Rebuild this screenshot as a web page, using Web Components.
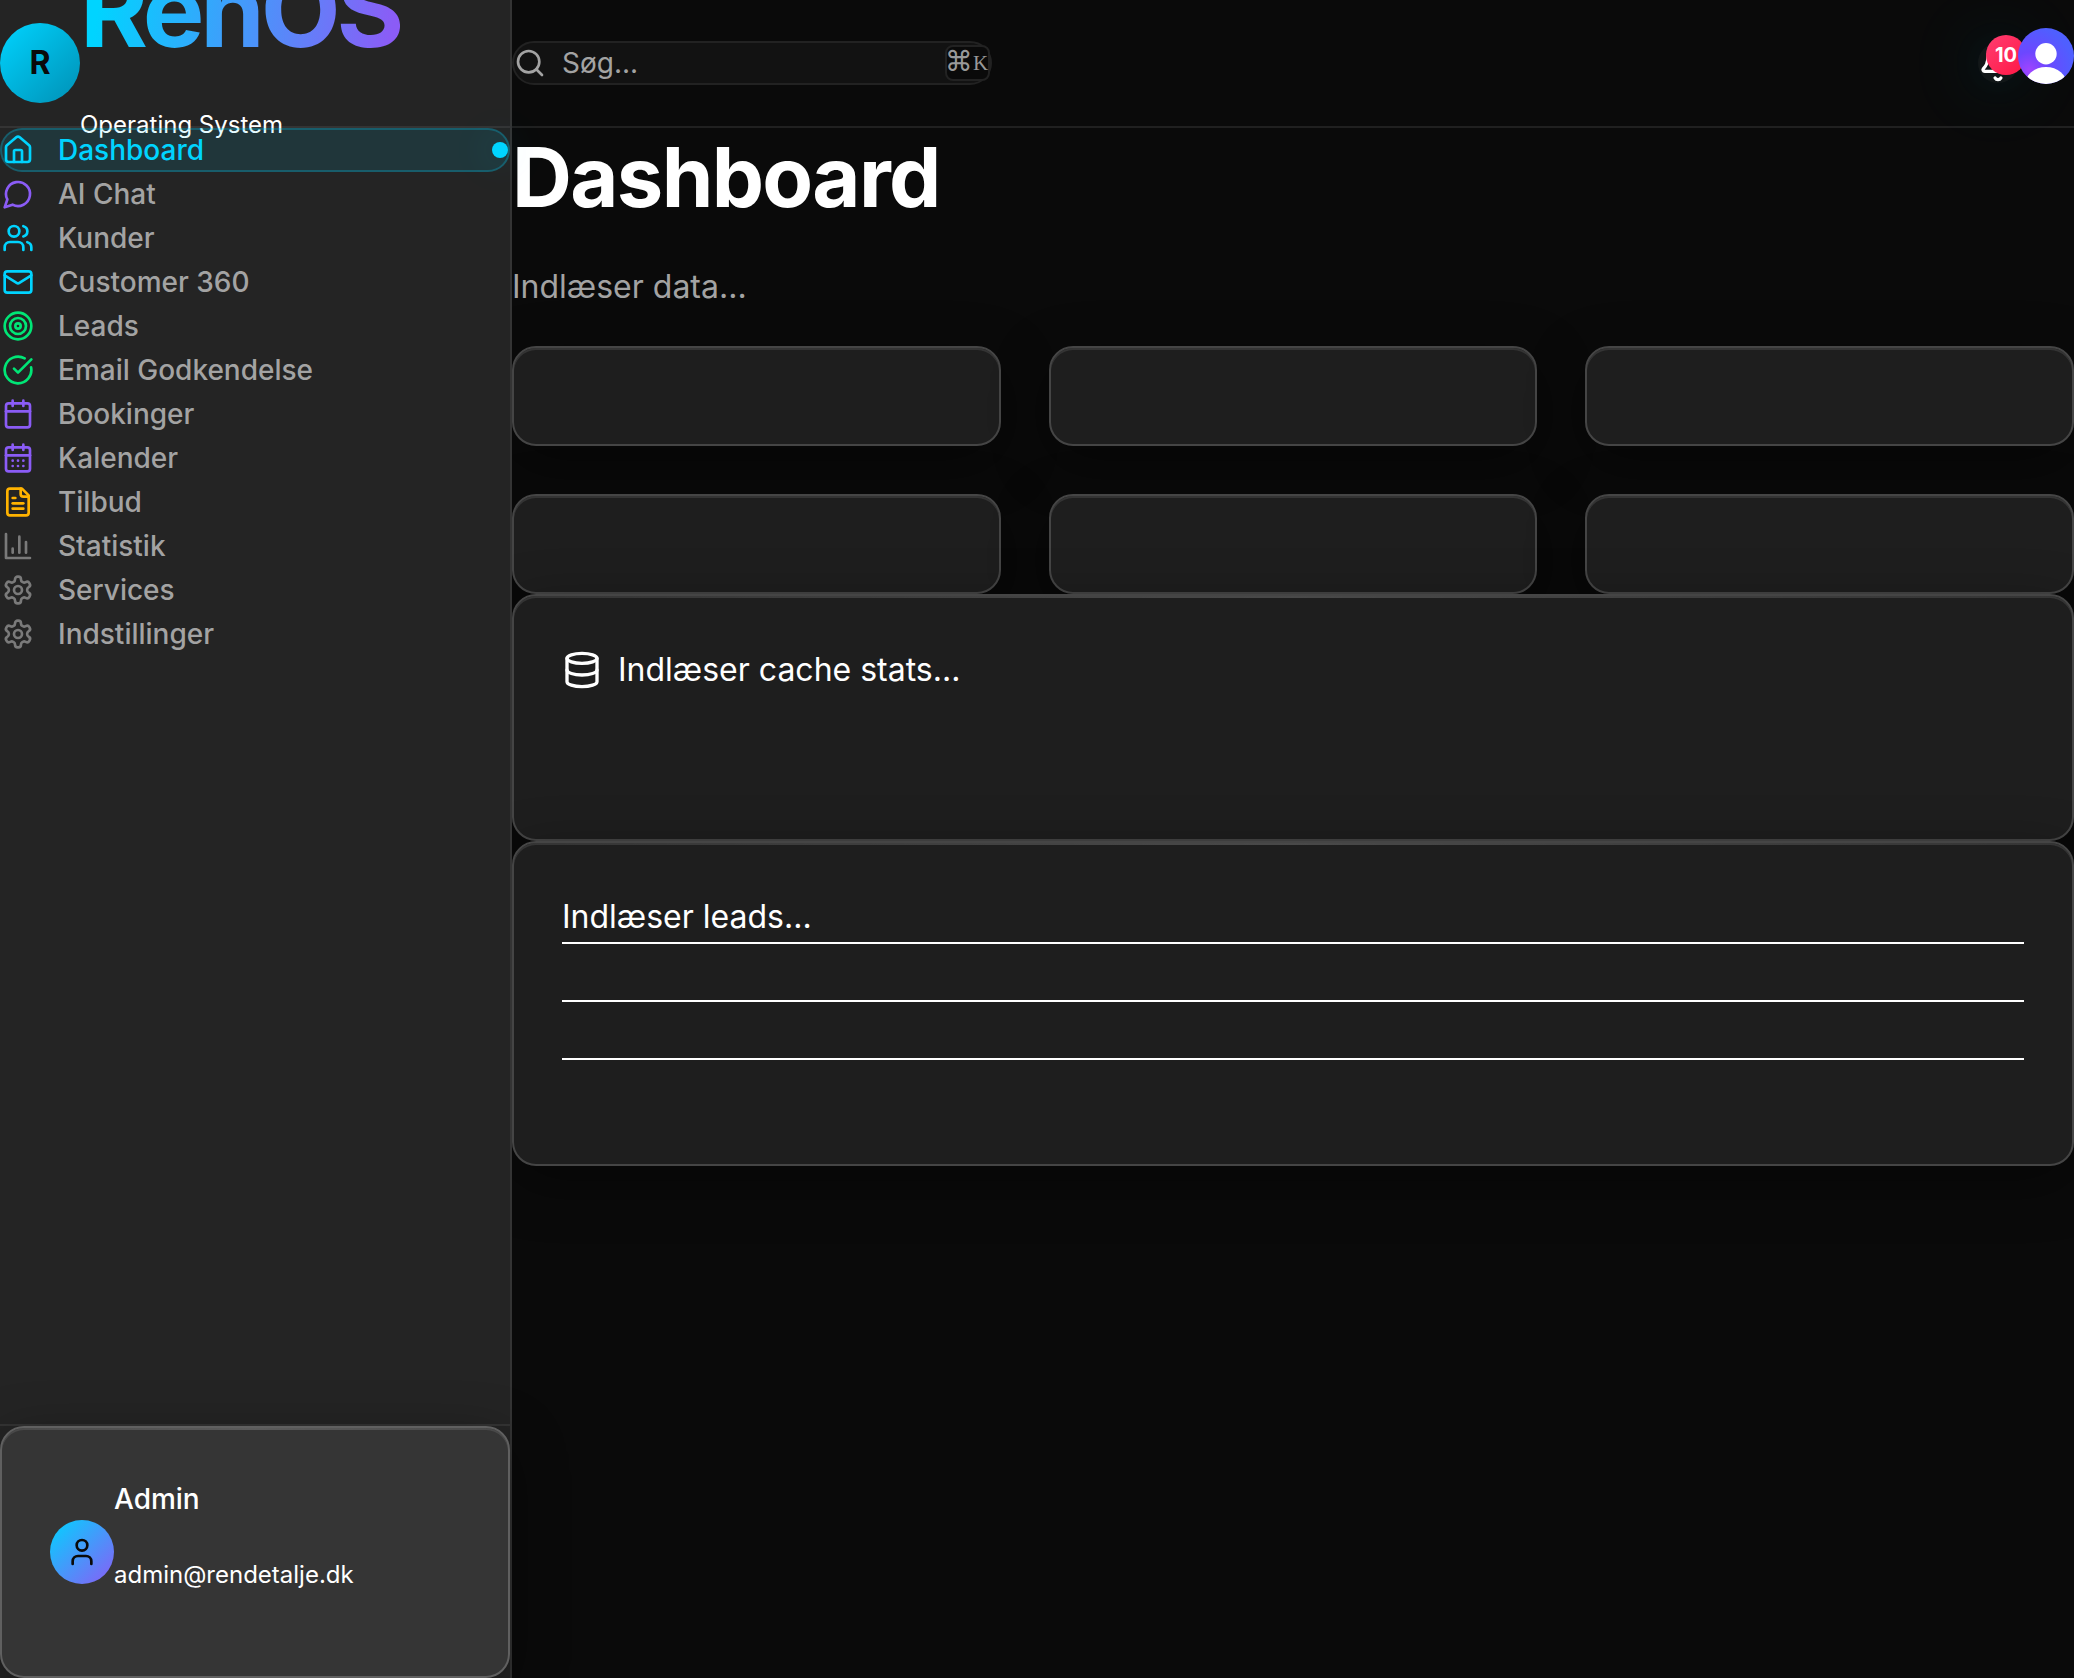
<!DOCTYPE html>
<html lang="da"><head><meta charset="utf-8"><title>RenOS</title>
<style>
html,body{margin:0;height:100%;background:#0a0a0a;overflow:hidden}
body{font-family:Inter,"Liberation Sans",sans-serif;color:#fff;font-size:32px;line-height:1.6}
</style></head><body>
<ren-app></ren-app>
<script>
const ICONS={
home:'<path d="M15 21v-8a1 1 0 0 0-1-1h-4a1 1 0 0 0-1 1v8"/><path d="M3 10a2 2 0 0 1 .709-1.528l7-5.999a2 2 0 0 1 2.582 0l7 5.999A2 2 0 0 1 21 10v9a2 2 0 0 1-2 2H5a2 2 0 0 1-2-2z"/>',
chat:'<path d="M7.9 20A9 9 0 1 0 4 16.1L2 22Z"/>',
users:'<path d="M16 21v-2a4 4 0 0 0-4-4H6a4 4 0 0 0-4 4v2"/><circle cx="9" cy="7" r="4"/><path d="M22 21v-2a4 4 0 0 0-3-3.87"/><path d="M16 3.13a4 4 0 0 1 0 7.75"/>',
mail:'<rect width="20" height="16" x="2" y="4" rx="2"/><path d="m22 7-8.97 5.7a1.94 1.94 0 0 1-2.06 0L2 7"/>',
target:'<circle cx="12" cy="12" r="10"/><circle cx="12" cy="12" r="6"/><circle cx="12" cy="12" r="2"/>',
check:'<path d="M21.801 10A10 10 0 1 1 17 3.335"/><path d="m9 11 3 3L22 4"/>',
calendar:'<path d="M8 2v4"/><path d="M16 2v4"/><rect width="18" height="18" x="3" y="4" rx="2"/><path d="M3 10h18"/>',
days:'<path d="M8 2v4"/><path d="M16 2v4"/><rect width="18" height="18" x="3" y="4" rx="2"/><path d="M3 10h18"/><path d="M8 14h.01"/><path d="M12 14h.01"/><path d="M16 14h.01"/><path d="M8 18h.01"/><path d="M12 18h.01"/><path d="M16 18h.01"/>',
file:'<path d="M15 2H6a2 2 0 0 0-2 2v16a2 2 0 0 0 2 2h12a2 2 0 0 0 2-2V7Z"/><path d="M14 2v4a2 2 0 0 0 2 2h4"/><path d="M10 9H8"/><path d="M16 13H8"/><path d="M16 17H8"/>',
chart:'<path d="M3 3v18h18"/><path d="M13 17V5"/><path d="M18 17V9"/><path d="M8 17v-3"/>',
gear:'<path d="M12.22 2h-.44a2 2 0 0 0-2 2v.18a2 2 0 0 1-1 1.73l-.43.25a2 2 0 0 1-2 0l-.15-.08a2 2 0 0 0-2.73.73l-.22.38a2 2 0 0 0 .73 2.73l.15.1a2 2 0 0 1 1 1.72v.51a2 2 0 0 1-1 1.74l-.15.09a2 2 0 0 0-.73 2.73l.22.38a2 2 0 0 0 2.73.73l.15-.08a2 2 0 0 1 2 0l.43.25a2 2 0 0 1 1 1.73V20a2 2 0 0 0 2 2h.44a2 2 0 0 0 2-2v-.18a2 2 0 0 1 1-1.73l.43-.25a2 2 0 0 1 2 0l.15.08a2 2 0 0 0 2.73-.73l.22-.39a2 2 0 0 0-.73-2.73l-.15-.08a2 2 0 0 1-1-1.74v-.5a2 2 0 0 1 1-1.74l.15-.09a2 2 0 0 0 .73-2.73l-.22-.38a2 2 0 0 0-2.73-.73l-.15.08a2 2 0 0 1-2 0l-.43-.25a2 2 0 0 1-1-1.73V4a2 2 0 0 0-2-2z"/><circle cx="12" cy="12" r="3"/>',
search:'<circle cx="11" cy="11" r="8"/><path d="m21 21-4.3-4.3"/>',
bell:'<path d="M10.268 21a2 2 0 0 0 3.464 0"/><path d="M3.262 15.326A1 1 0 0 0 4 17h16a1 1 0 0 0 .74-1.673C19.41 13.956 18 12.499 18 8A6 6 0 0 0 6 8c0 4.499-1.411 5.956-2.738 7.326"/>',
user:'<path d="M19 21v-2a4 4 0 0 0-4-4H9a4 4 0 0 0-4 4v2"/><circle cx="12" cy="7" r="4"/>',
database:'<ellipse cx="12" cy="5" rx="9" ry="3"/><path d="M3 5V19A9 3 0 0 0 21 19V5"/><path d="M3 12A9 3 0 0 0 21 12"/>'
};
function define(name,render){
  customElements.define(name,class extends HTMLElement{
    connectedCallback(){
      if(!this.shadowRoot)this.attachShadow({mode:'open'}).innerHTML=render(this);
    }
  });
}
define('ren-icon',el=>`<style>:host{display:block;flex:none;width:var(--size,32px);height:var(--size,32px)}svg{display:block;width:100%;height:100%;fill:none;stroke:currentColor;stroke-width:2;stroke-linecap:round;stroke-linejoin:round}</style><svg viewBox="0 0 24 24">${ICONS[el.getAttribute('name')]}</svg>`);

define('ren-nav-item',el=>`<style>
:host{display:flex;align-items:center;gap:24px;box-sizing:border-box;height:44px;border:2px solid transparent;border-radius:24px;position:relative;font-size:28px;line-height:40px;font-weight:500;color:#a3a3a3}
ren-icon{color:${el.getAttribute('tint')}}
.dot{display:none}
:host([active]){background:rgba(0,212,255,.1);border-color:rgba(0,212,255,.25);color:#00d4ff}
:host([active]) .dot{display:block;width:16px;height:16px;border-radius:50%;background:#00d4ff;margin-left:auto;box-shadow:0 0 40px rgba(0,212,255,.3)}
</style><ren-icon name="${el.getAttribute('icon')}"></ren-icon><slot></slot><span class="dot"></span>`);

define('ren-card',()=>`<style>
:host{display:block;box-sizing:border-box;padding:48px;border:2px solid #454545;border-radius:24px;background:#1e1e1e;box-shadow:0 16px 56px rgba(0,0,0,.4),inset 0 2px 0 rgba(255,255,255,.1);position:relative}
:host([shine]){background:linear-gradient(90deg,transparent,rgba(255,255,255,.1),transparent) top/100% 2px no-repeat,var(--fill,#1e1e1e)}
</style><slot></slot>`);

define('ren-brand',()=>`<style>
:host{display:flex;align-items:center;box-sizing:border-box;height:128px;border-bottom:2px solid #343434;flex:none}
.mark{width:80px;height:80px;flex:none;border-radius:50%;background:linear-gradient(135deg,#00d4ff,#0090b5);display:grid;place-items:center;color:#0a0a0a;font-size:32px;font-weight:700}
h1{margin:0;font-size:103.7px;line-height:114px;font-weight:700;letter-spacing:-.04em;background:linear-gradient(100deg,#00d4ff 8%,#8b5cf6 96%);-webkit-background-clip:text;background-clip:text;color:transparent}
p{margin:39px 0 30px;font-size:24px;line-height:38px}
</style><div class="mark">R</div><div><h1>RenOS</h1><p>Operating System</p></div>`);

define('ren-profile',()=>`<style>
:host{display:block;flex:none;border-top:2px solid #343434}
ren-card{--fill:#353535;height:252px;display:flex;align-items:center;border-color:#606060}
.av{width:64px;height:64px;border-radius:50%;background:linear-gradient(135deg,#00d4ff,#8b5cf6);display:grid;place-items:center;color:#0a0a0a;flex:none}
p{margin:0;font-size:28px;line-height:44px;font-weight:500}
p+p{font-size:24px;line-height:38px;font-weight:400;margin:35px 0 33px}
</style><ren-card shine><div class="av"><ren-icon name="user"></ren-icon></div><div><p>Admin</p><p>admin@rendetalje.dk</p></div></ren-card>`);

define('ren-sidebar',()=>`<style>
:host{display:flex;flex-direction:column;width:512px;height:100%;box-sizing:border-box;border-right:2px solid #343434;background:#242424;flex:none}
nav{flex:1;display:flex;flex-direction:column}
</style><ren-brand></ren-brand><nav>${[
['home','#00d4ff','Dashboard'],['chat','#8b5cf6','AI Chat'],['users','#00d4ff','Kunder'],['mail','#00d4ff','Customer 360'],['target','#00e676','Leads'],['check','#00e676','Email Godkendelse'],['calendar','#8b5cf6','Bookinger'],['days','#8b5cf6','Kalender'],['file','#ffb300','Tilbud'],['chart','#7a7a7a','Statistik'],['gear','#7a7a7a','Services'],['gear','#7a7a7a','Indstillinger']
].map(([i,t,l],n)=>`<ren-nav-item icon="${i}" tint="${t}"${n?'':' active'}>${l}</ren-nav-item>`).join('')}</nav><ren-profile></ren-profile>`);

define('ren-search',()=>`<style>
:host{display:flex;align-items:center;box-sizing:border-box;width:480px;height:44px;border:2px solid #222;border-radius:24px;background:#121212;color:#a3a3a3;font-size:28px;line-height:40px}
.hint{margin-left:16px;flex:1}
kbd{box-sizing:border-box;width:45px;height:36px;border:2px solid #222;border-radius:8px;background:#0a0a0a;font:21px/30px "Liberation Serif",serif;display:flex;align-items:center;color:#999}
.cmd{font:28px/30px "DejaVu Sans",sans-serif;width:26px;text-indent:-2px;margin-top:-2px}
.key{margin-top:-1px}
</style><ren-icon name="search"></ren-icon><span class="hint">Søg...</span><kbd><span class="cmd">⌘</span><span class="key">K</span></kbd>`);

define('ren-header',()=>`<style>
:host{display:flex;align-items:center;justify-content:space-between;box-sizing:border-box;height:128px;border-bottom:2px solid #202020}
.right{display:flex;align-items:center}
.bell{--size:40px;position:relative;width:40px;height:40px;border-radius:50%;background:#121718;box-shadow:0 0 40px rgba(0,212,255,.05),0 0 80px rgba(0,212,255,.2)}
.count{position:absolute;left:8px;top:-8px;width:40px;height:40px;border-radius:50%;background:linear-gradient(135deg,#ff3d71,#ff1744);font-size:20px;line-height:40px;font-weight:700;text-align:center}
.avatar{width:56px;height:56px;margin:-14px 0 0 0;position:relative;border-radius:50%;overflow:hidden;flex:none}
svg{display:block}
</style><ren-search></ren-search><div class="right"><div class="bell"><ren-icon name="bell"></ren-icon><span class="count">10</span></div>
<div class="avatar"><svg width="56" height="56" viewBox="0 0 56 56"><defs><radialGradient id="g" cx=".2" cy=".75" r=".8"><stop offset="0" stop-color="#a044ff"/><stop offset=".4" stop-color="#6c47ff"/><stop offset="1" stop-color="#4f5fff"/></radialGradient></defs><rect width="56" height="56" fill="url(#g)"/><circle cx="28" cy="25.8" r="10.7" fill="#fff"/><ellipse cx="28" cy="57" rx="21" ry="18" fill="#fff"/></svg></div></div>`);

define('ren-dashboard',()=>`<style>
:host{display:block}
h1{margin:0;font-size:83px;line-height:98px;font-weight:700;letter-spacing:-.02em}
.sub{margin:35px 0 0;height:85px;color:#a3a3a3;line-height:51px}
.grid{display:grid;grid-template-columns:repeat(3,1fr);gap:48px}
.grid ren-card{height:100px}
.row{display:flex;align-items:center;gap:16px;margin-bottom:96px;--size:40px}
.line{height:56px;border-top:2px solid #fff}
</style><h1>Dashboard</h1><p class="sub">Indlæser data...</p>
<div class="grid">${'<ren-card></ren-card>'.repeat(6)}</div>
<ren-card shine><div class="row"><ren-icon name="database"></ren-icon><span>Indlæser cache stats...</span></div></ren-card>
<ren-card shine><div>Indlæser leads...</div>${'<div class="line"></div>'.repeat(3)}</ren-card>`);

define('ren-app',()=>`<style>
:host{display:flex;height:1678px}
main{flex:1;min-width:0}
ren-sidebar{position:relative;z-index:1}
</style><ren-sidebar></ren-sidebar><main><ren-header></ren-header><ren-dashboard></ren-dashboard></main>`);
</script>
</body></html>
